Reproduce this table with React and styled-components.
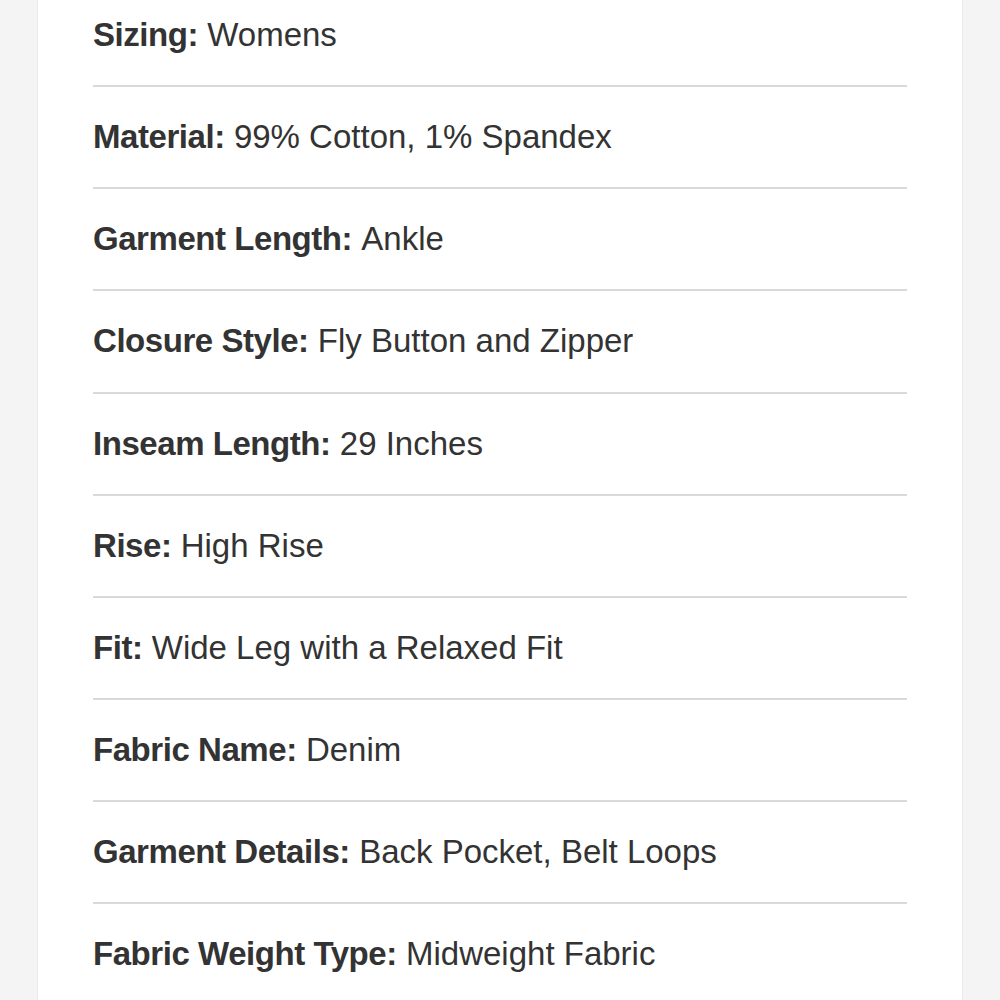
import React from "react";
import styled, { createGlobalStyle } from "styled-components";

const GlobalStyle = createGlobalStyle`
  html, body {
    margin: 0;
    padding: 0;
    background: #f4f4f4;
  }
  body {
    font-family: "Liberation Sans", Arial, Helvetica, sans-serif;
    color: #333333;
    overflow: hidden;
  }
`;

const Page = styled.div`
  width: 1000px;
  height: 1000px;
  overflow: hidden;
  background: #f4f4f4;
`;

const Card = styled.div`
  margin: -15px 37px 0;
  padding: 0 55px;
  background: #ffffff;
  border-left: 1px solid #ececec;
  border-right: 1px solid #ececec;
  min-height: 1100px;
`;

const Row = styled.div`
  display: flex;
  align-items: center;
  height: 100.125px;
  border-bottom: 2px solid #d9d9d9;
  font-size: 33px;
  line-height: 40px;
  white-space: nowrap;
`;

const Label = styled.strong`
  font-weight: 700;
  letter-spacing: -0.45px;
  margin-right: 0.28em;
`;

const specs = [
  ["Sizing", "Womens"],
  ["Material", "99% Cotton, 1% Spandex"],
  ["Garment Length", "Ankle"],
  ["Closure Style", "Fly Button and Zipper"],
  ["Inseam Length", "29 Inches"],
  ["Rise", "High Rise"],
  ["Fit", "Wide Leg with a Relaxed Fit"],
  ["Fabric Name", "Denim"],
  ["Garment Details", "Back Pocket, Belt Loops"],
  ["Fabric Weight Type", "Midweight Fabric"],
];

const App = () => {
  return (
    <Page>
      <GlobalStyle />
      <Card>
        {specs.map(([label, value]) => (
          <Row key={label}>
            <Label>{label}:</Label>
            {value}
          </Row>
        ))}
      </Card>
    </Page>
  );
};

export default App;
